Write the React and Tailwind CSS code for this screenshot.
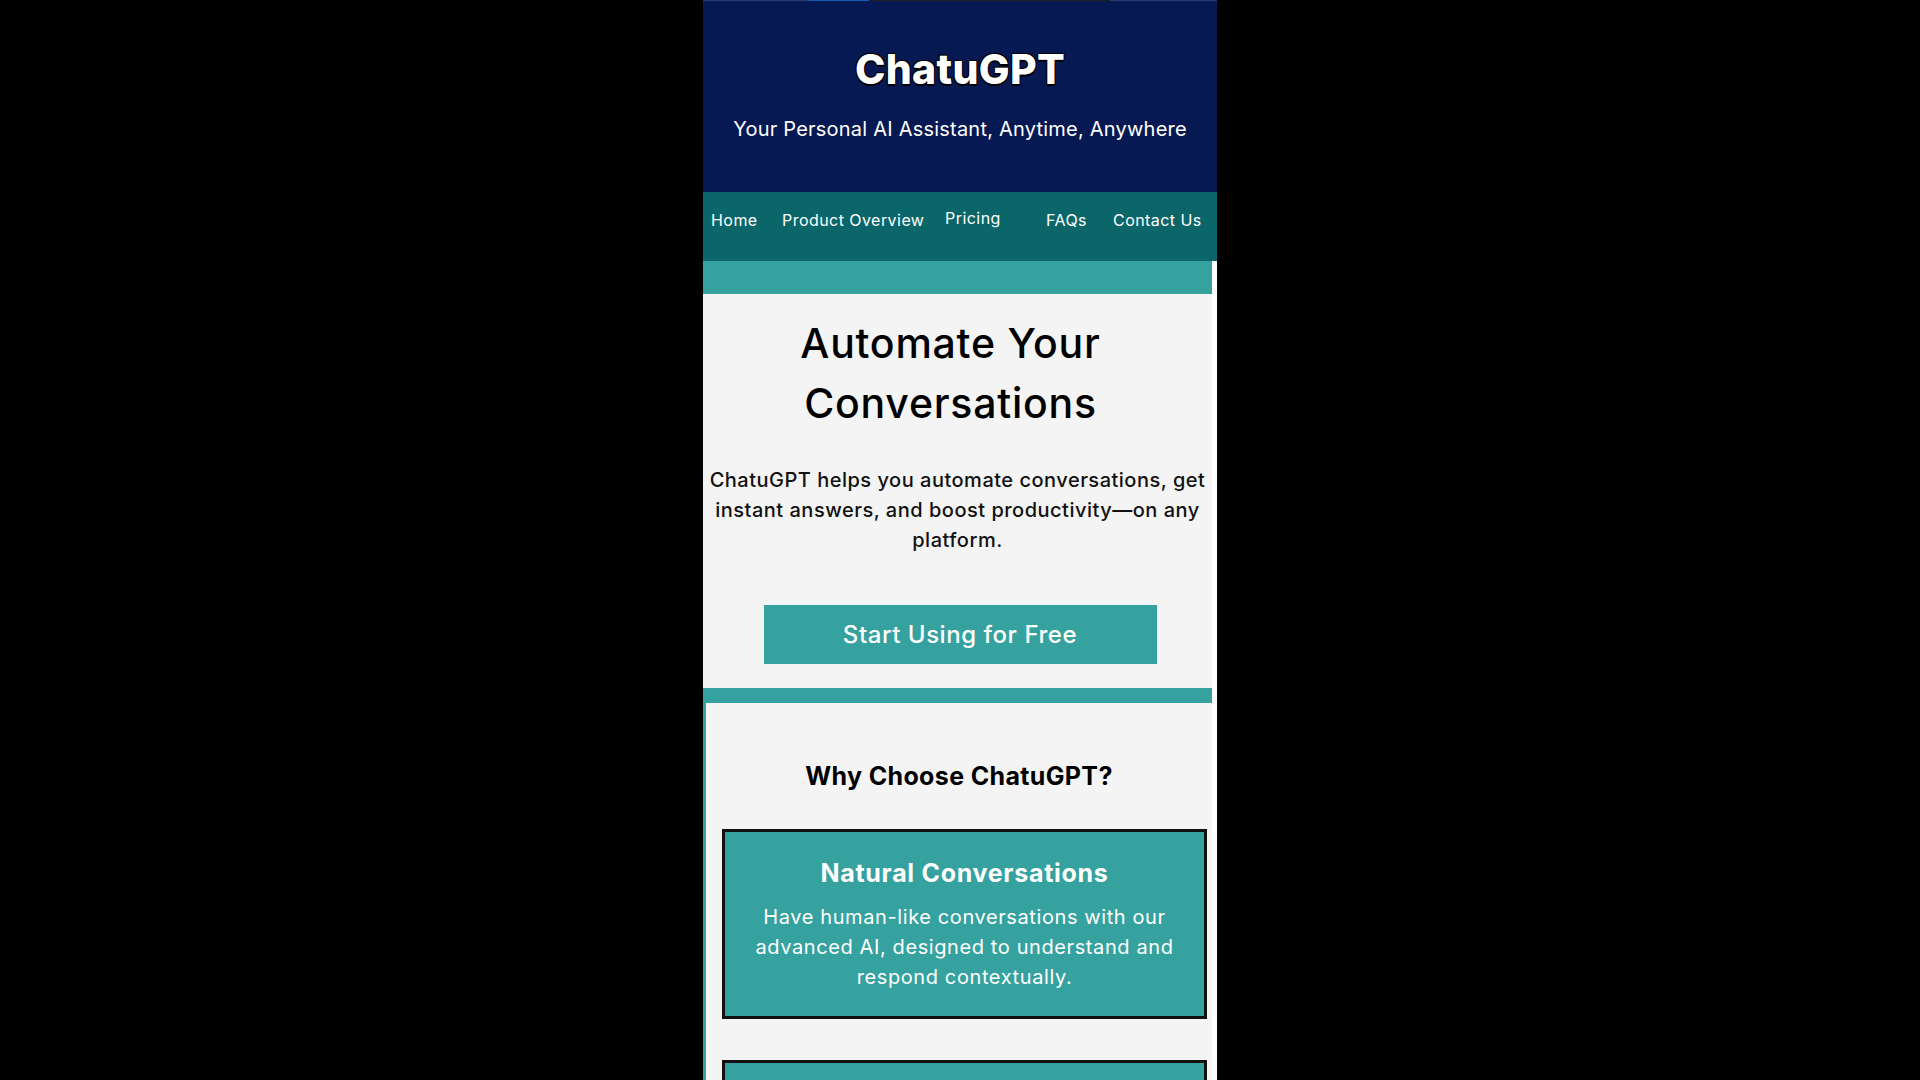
import { useState } from 'react';

const navLinks = [
  { label: 'Home', width: 'w-[71px]' },
  { label: 'Product Overview', width: 'w-[163px]' },
  { label: 'Pricing', width: 'w-[101px]', lift: true },
  { label: 'FAQs', width: 'w-[67px]' },
  { label: 'Contact Us', width: 'w-[100px]' }
];

const features = [
  {
    title: 'Natural Conversations',
    text: 'Have human-like conversations with our advanced AI, designed to understand and respond contextually.'
  },
  {
    title: 'Instant Answers',
    text: 'Get quick and accurate responses to your questions, any time of the day or night.'
  }
];

function FeatureCard({ title, text }) {
  return (
    <div className="ml-[16px] w-[485px] border-[3px] border-[#111] bg-[#35A29F] px-[16px] pt-[25px] pb-[24px] text-center text-white">
      <h3 className="text-[25px] leading-[33px] font-bold tracking-[0.7px]">{title}</h3>
      <p className="mt-[12px] text-[20px] leading-[30px] tracking-[0.6px]">{text}</p>
    </div>
  );
}

export default function App() {
  const [active] = useState('Home');

  return (
    <div className="flex min-h-screen justify-center bg-black font-['Inter','Liberation_Sans',sans-serif]">
      <div className="w-[514px] bg-white">
        <header className="h-[192px] bg-[#071952] text-center text-white">
          <div className="flex h-px">
            <div className="w-[106px] bg-[#2b3a6b]" />
            <div className="w-[60px] bg-[#0a5fb5]" />
            <div className="w-[241px] bg-[#1f1f1f]" />
            <div className="flex-1 bg-[#2b3a6b]" />
          </div>
          <h1 className="pt-[42px] text-[41px] leading-[52px] font-extrabold tracking-[0.3px] [text-shadow:1px_1px_0_#000,-1px_-1px_0_#000,1px_-1px_0_#000,-1px_1px_0_#000,0_2px_0_#000]">
            ChatuGPT
          </h1>
          <p className="mt-[20px] text-[20px] leading-[28px] tracking-[0.22px]">Your Personal AI Assistant, Anytime, Anywhere</p>
        </header>

        <nav className="flex h-[69px] bg-[#0B666A] pt-[16px] pl-[8px] text-white">
          {navLinks.map((link) => (
            <a
              key={link.label}
              href="#"
              className={`${link.width} shrink-0 text-[16px] leading-[24px] tracking-[0.45px] ${link.lift ? '-mt-[2px]' : ''} ${active === link.label ? '' : ''}`}
            >
              {link.label}
            </a>
          ))}
        </nav>

        <div className="h-[33px] w-[509px] bg-[#35A29F]" />

        <section className="w-[509px] bg-[#f4f4f4] pt-[19px] pb-[24px] text-center text-black">
          <h2 className="mx-auto w-[460px] pr-[14px] text-[41px] leading-[60px] font-medium tracking-[0.75px]">
            Automate Your Conversations
          </h2>
          <p className="mt-[32px] px-[2px] text-[20px] leading-[30px] font-medium tracking-[0.5px] text-[#111]">
            ChatuGPT helps you automate conversations, get instant answers, and boost productivity—on any platform.
          </p>
          <button className="mt-[50px] ml-[5px] h-[59px] w-[393px] bg-[#35A29F] text-[24px] font-medium tracking-[0.55px] text-white">
            Start Using for Free
          </button>
        </section>

        <div className="h-[15px] w-[509px] bg-[#35A29F]" />

        <section className="w-[509px] border-l-[3px] border-[#35A29F] bg-[#f4f4f4] pt-[55px] pb-[40px]">
          <h2 className="text-center text-[25px] leading-[36px] font-bold tracking-[0.35px] text-black">Why Choose ChatuGPT?</h2>
          <div className="mt-[35px] flex flex-col gap-[41px]">
            {features.map((f) => (
              <FeatureCard key={f.title} title={f.title} text={f.text} />
            ))}
          </div>
        </section>
      </div>
    </div>
  );
}
